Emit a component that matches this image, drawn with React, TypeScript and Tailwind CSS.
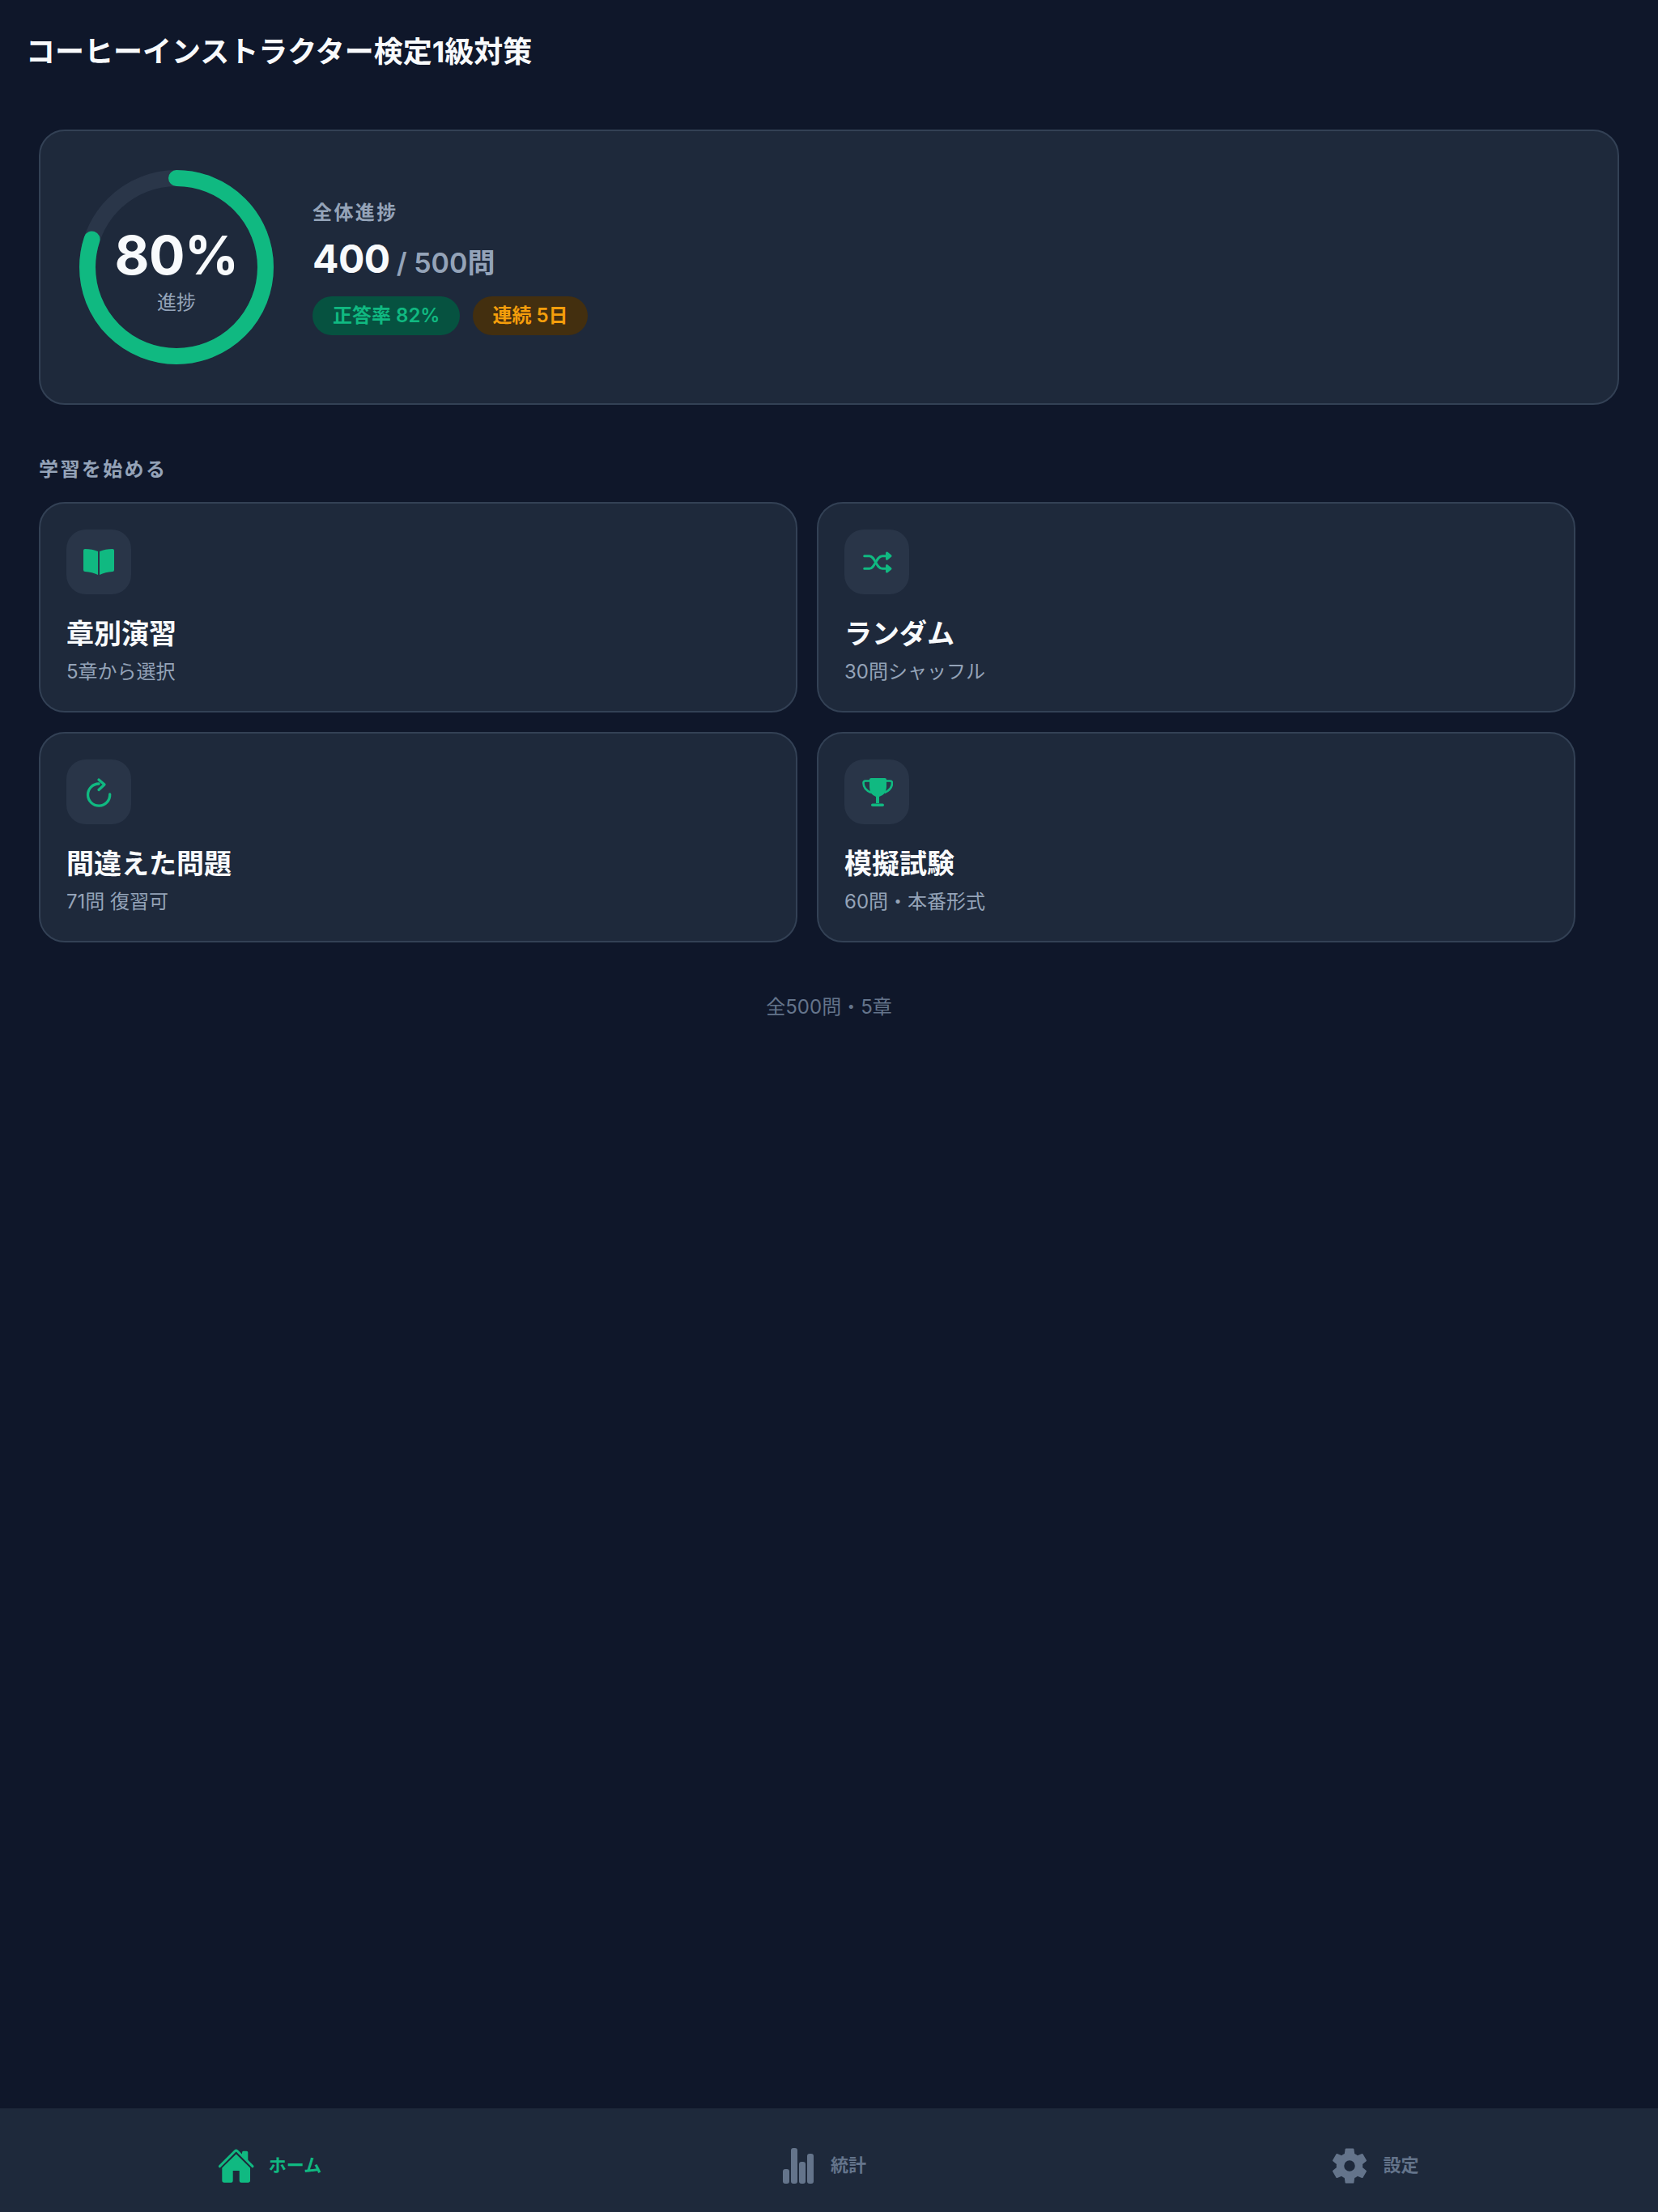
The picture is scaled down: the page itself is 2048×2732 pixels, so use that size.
const font = "font-['Inter','Noto_Sans_CJK_JP',sans-serif]";

function BookIcon() {
  return (
    <svg width="40" height="40" viewBox="0 0 40 40" fill="#10b981">
      <path d="M3 4Q12 4 19 7V36Q12 32.5 3 32Q1 32 1 30V6Q1 4 3 4Z" />
      <path d="M37 4Q28 4 21 7V36Q28 32.5 37 32Q39 32 39 30V6Q39 4 37 4Z" />
    </svg>
  );
}

function ShuffleIcon() {
  return (
    <svg width="40" height="40" viewBox="0 0 40 40" fill="none" stroke="#10b981" strokeWidth="3" strokeLinecap="round" strokeLinejoin="round">
      <path d="M4.7 12.7H11C18 12.7 19 28.3 27 28.3H36" />
      <path d="M4.7 28.3H11C18 28.3 19 12.7 27 12.7H36" />
      <path d="M32.5 9L37 12.7L32.5 16.4Z" fill="#10b981" />
      <path d="M32.5 24.6L37 28.3L32.5 32Z" fill="#10b981" />
    </svg>
  );
}

function RetryIcon() {
  return (
    <svg width="40" height="40" viewBox="0 0 40 40" fill="none" stroke="#10b981" strokeWidth="3.3" strokeLinecap="round" strokeLinejoin="round">
      <path d="M33.7 23a13.6 13.6 0 1 1-13.6-13" />
      <path d="M20 5l7 6-7 6.5" />
    </svg>
  );
}

function TrophyIcon() {
  return (
    <svg width="40" height="40" viewBox="0 0 40 40" fill="#10b981">
      <path d="M11 4.5Q11 3 13 3H30Q32 3 32 4.5V14Q32 23 23 26V34H19V26Q11 23 11 14Z" />
      <path d="M11 6.5H6Q3.5 6.5 3.5 9Q3.5 17 13 21" fill="none" stroke="#10b981" strokeWidth="2.6" />
      <path d="M32 6.5H36.5Q39 6.5 39 9Q39 17 29.5 21" fill="none" stroke="#10b981" strokeWidth="2.6" />
      <rect x="13" y="34.5" width="16" height="3.6" rx="1.8" />
    </svg>
  );
}

function HomeIcon() {
  return (
    <svg width="48" height="48" viewBox="0 0 48 48" fill="#10b981">
      <path d="M3.4 24.6L22.3 5.8Q23.7 4.4 25.1 5.8L44 24.6" fill="none" stroke="#10b981" strokeWidth="3" strokeLinecap="round" />
      <path d="M23.7 9.4L41 26.4V42Q41 44.7 38.3 44.7H30Q27.7 44.7 27.7 42.4V30H19.7V42.4Q19.7 44.7 17.4 44.7H9Q6.3 44.7 6.3 42V26.4Z" />
      <path d="M31 7.4Q31 5.7 32.7 5.7H36.6Q38.3 5.7 38.3 7.4V18.5L31 11.5Z" />
    </svg>
  );
}

function BarsIcon() {
  return (
    <svg width="38" height="44" viewBox="0 0 38 44" fill="#64748b">
      <rect x="0" y="26" width="8" height="18" rx="3" />
      <rect x="10" y="0" width="8" height="44" rx="3" />
      <rect x="20" y="17" width="8" height="27" rx="3" />
      <rect x="30" y="7" width="8" height="37" rx="3" />
    </svg>
  );
}

function GearIcon() {
  return (
    <svg width="54" height="54" viewBox="0 0 24 24" fill="#64748b" fillRule="evenodd">
      <path d="M19.14,12.94c0.04-0.3,0.06-0.61,0.06-0.94c0-0.32-0.02-0.64-0.07-0.94l2.03-1.58c0.18-0.14,0.23-0.41,0.12-0.61l-1.92-3.32c-0.12-0.22-0.37-0.29-0.59-0.22l-2.39,0.96c-0.5-0.38-1.03-0.7-1.62-0.94L14.4,2.81c-0.04-0.24-0.24-0.41-0.48-0.41h-3.84c-0.24,0-0.43,0.17-0.47,0.41L9.25,5.35C8.66,5.59,8.12,5.92,7.63,6.29L5.24,5.33c-0.22-0.08-0.47,0-0.59,0.22L2.74,8.87C2.62,9.08,2.66,9.34,2.86,9.48l2.03,1.58C4.84,11.36,4.8,11.69,4.8,12s0.02,0.64,0.07,0.94l-2.03,1.58c-0.18,0.14-0.23,0.41-0.12,0.61l1.92,3.32c0.12,0.22,0.37,0.29,0.59,0.22l2.39-0.96c0.5,0.38,1.03,0.7,1.62,0.94l0.36,2.54c0.05,0.24,0.24,0.41,0.48,0.41h3.84c0.24,0,0.44-0.17,0.47-0.41l0.36-2.54c0.59-0.24,1.13-0.56,1.62-0.94l2.39,0.96c0.22,0.08,0.47,0,0.59-0.22l1.92-3.32c0.12-0.22,0.07-0.47-0.12-0.61L19.14,12.94z M12,15a3,3 0 1 1 0-6a3,3 0 0 1 0 6z" />
    </svg>
  );
}

function ProgressRing() {
  const r = 110;
  const c = 2 * Math.PI * r;
  return (
    <div className="relative w-[240px] h-[240px] shrink-0">
      <svg width="240" height="240" viewBox="0 0 240 240" className="-rotate-90">
        <circle cx="120" cy="120" r={r} fill="none" stroke="#2a3649" strokeWidth="20" />
        <circle cx="120" cy="120" r={r} fill="none" stroke="#10b981" strokeWidth="20" strokeLinecap="round" strokeDasharray={`${c * 0.8} ${c}`} />
      </svg>
      <div className="absolute inset-0 pt-[4px] flex flex-col items-center justify-center">
        <span className="text-[66px] leading-[80px] font-bold tracking-[-0.5px] text-[#f8fafc]">80%</span>
        <span className="text-[24px] leading-[32px] text-[#94a3b8] mt-[3px]">進捗</span>
      </div>
    </div>
  );
}

function ModeCard({ icon, title, sub }: { icon: React.ReactNode; title: string; sub: string }) {
  return (
    <div className="bg-[#1e293b] border-2 border-[#334155] rounded-[32px] p-[32px] h-[260px]">
      <div className="w-[80px] h-[80px] rounded-[24px] bg-[#293548] flex items-center justify-center">{icon}</div>
      <div className="mt-[26px] text-[34px] leading-[46px] font-bold text-[#f8fafc]">{title}</div>
      <div className="text-[24px] leading-[32px] text-[#94a3b8] mt-[8px]">{sub}</div>
    </div>
  );
}

function NavItem({ icon, label, active, box }: { icon: React.ReactNode; label: string; active?: boolean; box: string }) {
  return (
    <div className={`flex-1 flex items-center justify-center ${box}`}>
      {icon}
      <span className={`text-[22px] font-bold ${active ? "text-[#10b981]" : "text-[#64748b]"}`}>{label}</span>
    </div>
  );
}

export default function App() {
  return (
    <div className={`${font} flex flex-col h-[2732px] bg-[#0f172a]`}>
      <header className="h-[112px] px-[32px] pt-[16px] flex items-center">
        <h1 className="text-[36px] font-bold text-[#f8fafc]">コーヒーインストラクター検定1級対策</h1>
      </header>

      <main className="flex-1 p-[48px]">
        <section className="bg-[#1e293b] border-2 border-[#334155] rounded-[32px] p-[48px] flex items-center gap-[48px]">
          <ProgressRing />
          <div>
            <div className="text-[24px] leading-[32px] font-semibold tracking-[2.4px] text-[#94a3b8]">全体進捗</div>
            <div className="mt-[9px] flex items-baseline gap-[8px]">
              <span className="text-[48px] leading-[64px] font-bold tracking-[-0.5px] text-[#f8fafc]">400</span>
              <span className="text-[34px] font-semibold text-[#94a3b8]">/ 500問</span>
            </div>
            <div className="mt-[14px] flex gap-[16px]">
              <span className="h-[48px] px-[25px] rounded-full flex items-center bg-[#065240] text-[24px] font-semibold text-[#10b981]">正答率 82%</span>
              <span className="h-[48px] px-[24px] rounded-full flex items-center bg-[#432f0f] text-[24px] font-semibold text-[#f59e0b]">連続 5日</span>
            </div>
          </div>
        </section>

        <h2 className="mt-[64px] text-[24px] leading-[32px] font-semibold tracking-[2.4px] text-[#94a3b8]">学習を始める</h2>

        <div className="mt-[24px] w-[1898px] grid grid-cols-2 gap-[24px]">
          <ModeCard icon={<BookIcon />} title="章別演習" sub="5章から選択" />
          <ModeCard icon={<ShuffleIcon />} title="ランダム" sub="30問シャッフル" />
          <ModeCard icon={<RetryIcon />} title="間違えた問題" sub="71問 復習可" />
          <ModeCard icon={<TrophyIcon />} title="模擬試験" sub="60問・本番形式" />
        </div>

        <p className="mt-[64px] text-center text-[24px] leading-[32px] text-[#64748b]">全500問・5章</p>
      </main>

      <nav className="h-[128px] pt-[13px] bg-[#1e293b] flex items-center">
        <NavItem icon={<HomeIcon />} label="ホーム" active box="gap-[16px] pr-[21px]" />
        <NavItem icon={<BarsIcon />} label="統計" box="gap-[21px] pr-[13px]" />
        <NavItem icon={<GearIcon />} label="設定" box="gap-[14px] pr-[19px]" />
      </nav>
    </div>
  );
}
